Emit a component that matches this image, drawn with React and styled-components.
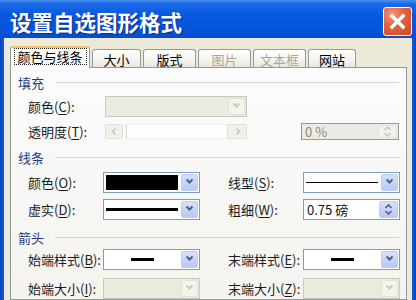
import React from 'react';
import styled, { createGlobalStyle } from 'styled-components';

const FONT = `"Noto Sans CJK SC", "Noto Sans", sans-serif`;

const Global = createGlobalStyle`
  html, body { margin: 0; padding: 0; background: #0A4FCF; overflow: hidden; }
  * { box-sizing: border-box; }
`;

const Window = styled.div`
  width: 416px;
  height: 300px;
  display: flex;
  flex-direction: column;
  overflow: hidden;
  font-family: ${FONT};
  background: linear-gradient(to right, #0838B0 0, #0A58D8 2px, #0A58D8 calc(100% - 2px), #0838B0 100%);
`;

const TitleBar = styled.div`
  height: 38px;
  flex: none;
  display: flex;
  align-items: center;
  justify-content: space-between;
  padding: 5px 4px 0 10px;
  background: linear-gradient(to bottom, #4C90F2 0%, #1A69E6 10%, #0859E0 40%, #0554DB 80%, #0A4DC8 100%);
`;

const Title = styled.h1`
  margin: 0;
  color: #fff;
  font-size: 21.5px;
  font-weight: 700;
  line-height: 1;
  text-shadow: 1px 1px 1px #0B2A8C;
`;

const CloseButton = styled.div`
  width: 29px;
  height: 29px;
  border: 1px solid #fff;
  border-radius: 3px;
  display: flex;
  align-items: center;
  justify-content: center;
  background: radial-gradient(circle at 30% 25%, #F49A7C 0%, #E4643D 40%, #D2461F 100%);
`;

const Body = styled.div`
  flex: 1;
  min-height: 0;
  margin: 0 4px;
  padding: 8px 5px 0 6px;
  background: #ECE9D8;
  display: flex;
  flex-direction: column;
`;

const TabStrip = styled.div`
  height: 21px;
  flex: none;
  display: flex;
  align-items: flex-end;
  gap: 2px;
`;

const Tab = styled.div`
  width: ${p => p.$w}px;
  height: ${p => (p.$active ? 22 : 18)}px;
  margin-bottom: ${p => (p.$active ? -1 : 0)}px;
  position: relative;
  z-index: ${p => (p.$active ? 2 : 1)};
  border: 1px solid #919B9C;
  border-bottom: none;
  border-radius: 3px 3px 0 0;
  display: flex;
  justify-content: center;
  align-items: ${p => (p.$active ? 'flex-start' : 'center')};
  padding-top: ${p => (p.$active ? 0 : 1)}px;
  font-size: 13px;
  line-height: 1;
  color: ${p => (p.$disabled ? '#ACA899' : '#000')};
  ${p =>
    p.$active
      ? 'border-top: 2px solid #F3C264; background: #FCFCFE;'
      : 'background: linear-gradient(#FFFFFF, #F4F3EE 60%, #E9E7DC);'}
`;

const FocusRect = styled.span`
  width: calc(100% - 5px);
  height: 17px;
  border: 1px dotted #222;
  display: flex;
  align-items: center;
  justify-content: center;
`;

const Panel = styled.div`
  flex: 1;
  border: 1px solid #919B9C;
  background: linear-gradient(#FCFCFE, #F4F3EE);
  padding: 6px 7px 0 7px;
  display: flex;
  flex-direction: column;
`;

const SectionHead = styled.div`
  height: 16px;
  flex: none;
  margin-top: ${p => p.$mt || 0}px;
  display: flex;
  align-items: center;
  gap: 11px;
  font-size: 13px;
  color: #1F3A7D;
  &::after {
    content: '';
    flex: 1;
    height: 1px;
    background: #D6D3C6;
  }
`;

const Row = styled.div`
  height: ${p => p.$h || 21}px;
  flex: none;
  margin-top: ${p => p.$mt || 0}px;
  margin-left: 10px;
  display: flex;
  align-items: center;
  gap: ${p => (p.$gap != null ? p.$gap : 28)}px;
`;

const Field = styled.div`
  display: flex;
  align-items: center;
  height: 100%;
`;

const Label = styled.span`
  width: ${p => p.$w || 75}px;
  flex: none;
  font-size: 13px;
  color: #1B1B1B;
  white-space: nowrap;
  line-height: 1;
`;

const Key = styled.u`
  text-underline-offset: 2px;
`;

const Combo = styled.div`
  width: ${p => p.$w || 97}px;
  height: 21px;
  flex: none;
  display: flex;
  align-items: stretch;
  padding: 1px;
  border: 1px solid ${p => (p.$disabled ? '#CAC8BB' : '#7F9DB9')};
  background: ${p => (p.$disabled ? '#EBEADF' : '#FFFFFF')};
`;

const ComboField = styled.div`
  flex: 1;
  display: flex;
  align-items: center;
  justify-content: ${p => (p.$center ? 'center' : 'stretch')};
  padding: 0 3px 0 1px;
`;

const DropButton = styled.div`
  width: 17px;
  flex: none;
  display: flex;
  align-items: center;
  justify-content: center;
  border-radius: 2px;
  border: 1px solid ${p => (p.$disabled ? '#E4E2D8' : '#BDCDF5')};
  background: ${p => (p.$disabled ? '#F4F3EE' : 'linear-gradient(#D5E0FC, #B7C9F5)')};
`;

const Swatch = styled.div`
  flex: 1;
  height: 15px;
  background: ${p => p.$color};
`;

const LineSample = styled.div`
  height: ${p => p.$thick}px;
  background: #000;
  ${p => (p.$len ? `width: ${p.$len}px;` : 'flex: 1;')}
`;

const Spin = styled.div`
  width: ${p => p.$w}px;
  height: ${p => p.$h}px;
  flex: none;
  margin-left: ${p => p.$ml || 0}px;
  display: flex;
  align-items: stretch;
  padding: 1px;
  border: 1px solid ${p => (p.$disabled ? '#9C9C94' : '#7F9DB9')};
  background: ${p => (p.$disabled ? '#ECEBE3' : '#FFFFFF')};
`;

const SpinText = styled.div`
  flex: 1;
  display: flex;
  align-items: center;
  padding-left: 2px;
  font-size: 13px;
  line-height: 1;
  color: ${p => (p.$disabled ? '#8A8A82' : '#111')};
`;

const SpinButtons = styled.div`
  width: 19px;
  flex: none;
  display: flex;
  flex-direction: column;
  align-items: center;
  justify-content: center;
  gap: 1px;
  border-radius: 2px;
  border: 1px solid ${p => (p.$disabled ? '#E4E2D8' : '#BDCDF5')};
  background: ${p => (p.$disabled ? '#F2F1EA' : 'linear-gradient(#D5E0FC, #B7C9F5)')};
`;

const Slider = styled.div`
  width: ${p => p.$w}px;
  height: 15px;
  flex: none;
  display: flex;
`;

const ScrollArrow = styled.div`
  width: ${p => p.$w}px;
  flex: none;
  display: flex;
  align-items: center;
  justify-content: center;
  border: 1px solid #E2E0D5;
  border-radius: 2px;
  background: #F1F0E9;
`;

const ScrollTrack = styled.div`
  flex: 1;
  margin-left: 3px;
  background: #FEFEFD;
  border-top: 1px solid #EFEEE8;
  border-bottom: 1px solid #EFEEE8;
  border-left: 1px solid #D8D6CB;
`;

const CHEVRONS = {
  down: 'M1.5 2.5 L4.5 5.5 L7.5 2.5',
  up: 'M1.5 6 L4.5 3 L7.5 6',
  left: 'M5.5 1.5 L2.5 4.5 L5.5 7.5',
  right: 'M3.5 1.5 L6.5 4.5 L3.5 7.5',
};

const Chevron = ({ dir = 'down', color = '#4D6185', h = 9, w = 2 }) => (
  <svg width={9} height={h} viewBox={`0 ${dir === 'up' ? 1.5 : dir === 'down' ? 1 : 0} 9 ${h}`}>
    <path d={CHEVRONS[dir]} fill="none" stroke={color} strokeWidth={w} />
  </svg>
);

const SpinArrow = ({ dir, color }) => (
  <svg width={9} height={5} viewBox="0 0 9 5">
    <path d={dir === 'up' ? 'M1.5 4 L4.5 1 L7.5 4' : 'M1.5 1 L4.5 4 L7.5 1'} fill="none" stroke={color} strokeWidth={1.6} />
  </svg>
);

const ComboBox = ({ w, disabled, center, children }) => (
  <Combo $w={w} $disabled={disabled}>
    <ComboField $center={center}>{children}</ComboField>
    <DropButton $disabled={disabled}>
      <Chevron dir="down" color={disabled ? '#CBC9BD' : '#4D6185'} />
    </DropButton>
  </Combo>
);

const SpinBox = ({ w, h, ml, disabled, value }) => (
  <Spin $w={w} $h={h} $ml={ml} $disabled={disabled}>
    <SpinText $disabled={disabled}>{value}</SpinText>
    <SpinButtons $disabled={disabled}>
      <SpinArrow dir="up" color={disabled ? '#C9C7BB' : '#4D6185'} />
      <SpinArrow dir="down" color={disabled ? '#C9C7BB' : '#4D6185'} />
    </SpinButtons>
  </Spin>
);

const tabs = [
  { t: '颜色与线条', w: 80, active: true },
  { t: '大小', w: 49 },
  { t: '版式', w: 53 },
  { t: '图片', w: 53, disabled: true },
  { t: '文本框', w: 53, disabled: true },
  { t: '网站', w: 48 },
];

export default function App() {
  return (
    <>
      <Global />
      <Window>
        <TitleBar>
          <Title>设置自选图形格式</Title>
          <CloseButton>
            <svg width="17" height="17" viewBox="0 0 17 17">
              <path d="M3 3 L14 14 M14 3 L3 14" stroke="#fff" strokeWidth="3.4" strokeLinecap="square" />
            </svg>
          </CloseButton>
        </TitleBar>
        <Body>
          <TabStrip>
            {tabs.map(tab => (
              <Tab key={tab.t} $w={tab.w} $active={tab.active} $disabled={tab.disabled}>
                {tab.active ? <FocusRect>{tab.t}</FocusRect> : tab.t}
              </Tab>
            ))}
          </TabStrip>
          <Panel>
            <SectionHead>填充</SectionHead>
            <Row $mt={6}>
              <Field>
                <Label $w={77}>颜色(<Key>C</Key>):</Label>
                <ComboBox w={142} disabled />
              </Field>
            </Row>
            <Row $mt={5} $h={18} $gap={0}>
              <Field>
                <Label $w={77}>透明度(<Key>T</Key>):</Label>
                <Slider $w={142}>
                  <ScrollArrow $w={18}>
                    <Chevron dir="left" color="#C6C4B8" w={1.6} />
                  </ScrollArrow>
                  <ScrollTrack />
                  <ScrollArrow $w={20}>
                    <Chevron dir="right" color="#C6C4B8" w={1.6} />
                  </ScrollArrow>
                </Slider>
              </Field>
              <SpinBox w={98} h={17} ml={54} disabled value="0 %" />
            </Row>

            <SectionHead $mt={9}>线条</SectionHead>
            <Row $mt={7}>
              <Field>
                <Label>颜色(<Key>O</Key>):</Label>
                <ComboBox>
                  <Swatch $color="#000" />
                </ComboBox>
              </Field>
              <Field>
                <Label>线型(<Key>S</Key>):</Label>
                <ComboBox>
                  <LineSample $thick={1} />
                </ComboBox>
              </Field>
            </Row>
            <Row $mt={6}>
              <Field>
                <Label>虚实(<Key>D</Key>):</Label>
                <ComboBox>
                  <LineSample $thick={3} />
                </ComboBox>
              </Field>
              <Field>
                <Label>粗细(<Key>W</Key>):</Label>
                <SpinBox w={97} h={21} value="0.75 磅" />
              </Field>
            </Row>

            <SectionHead $mt={9}>箭头</SectionHead>
            <Row $mt={4}>
              <Field>
                <Label>始端样式(<Key>B</Key>):</Label>
                <ComboBox center>
                  <LineSample $thick={3} $len={23} />
                </ComboBox>
              </Field>
              <Field>
                <Label>末端样式(<Key>E</Key>):</Label>
                <ComboBox center>
                  <LineSample $thick={3} $len={23} />
                </ComboBox>
              </Field>
            </Row>
            <Row $mt={8}>
              <Field>
                <Label>始端大小(<Key>I</Key>):</Label>
                <ComboBox disabled />
              </Field>
              <Field>
                <Label>末端大小(<Key>Z</Key>):</Label>
                <ComboBox disabled />
              </Field>
            </Row>
          </Panel>
        </Body>
      </Window>
    </>
  );
}
